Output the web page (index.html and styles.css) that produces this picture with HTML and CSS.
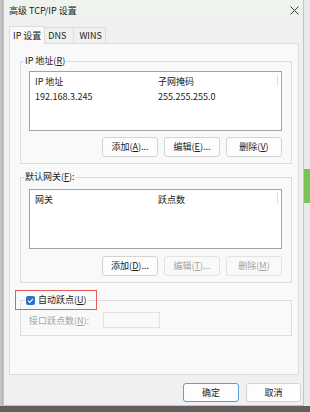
FILE: index.html
```html
<!DOCTYPE html>
<html lang="zh-CN">
<head>
<meta charset="utf-8">
<title>高级 TCP/IP 设置</title>
<link rel="stylesheet" href="styles.css">
</head>
<body>
<div class="screen">
  <div class="desk">
    <div class="side-left"></div>
    <div class="dialog">
      <div class="titlebar">
        <span class="title">高级 TCP/IP 设置</span>
        <svg class="close" width="9" height="9" viewBox="0 0 9 9"><path d="M0.5 0.5L8.5 8.5M8.5 0.5L0.5 8.5" stroke="#3a3a3a" stroke-width="1"/></svg>
      </div>
      <div class="content">
        <div class="tabs">
          <div class="tab active">IP 设置</div>
          <div class="tab">DNS</div>
          <div class="tab">WINS</div>
        </div>
        <div class="panel">
          <fieldset class="group g-ip">
            <legend>IP 地址(<u>R</u>)</legend>
            <div class="gbody">
              <div class="list">
                <div class="row head"><span class="c1">IP 地址</span><span class="c2">子网掩码</span><i class="divider"></i></div>
                <div class="row"><span class="c1">192.168.3.245</span><span class="c2">255.255.255.0</span></div>
              </div>
              <div class="btns">
                <button class="btn">添加(<u>A</u>)...</button>
                <button class="btn">编辑(<u>E</u>)...</button>
                <button class="btn">删除(<u>V</u>)</button>
              </div>
            </div>
          </fieldset>
          <fieldset class="group g-gw">
            <legend>默认网关(<u>F</u>):</legend>
            <div class="gbody">
              <div class="list">
                <div class="row head"><span class="c1">网关</span><span class="c2">跃点数</span><i class="divider"></i></div>
              </div>
              <div class="btns">
                <button class="btn">添加(<u>D</u>)...</button>
                <button class="btn disabled">编辑(<u>T</u>)...</button>
                <button class="btn disabled">删除(<u>M</u>)</button>
              </div>
            </div>
          </fieldset>
          <fieldset class="group g-metric">
            <legend class="check-legend">
              <span class="checkbox"><svg width="9" height="9" viewBox="0 0 9 9"><path d="M2 4.7L3.8 6.4L7 2.8" fill="none" stroke="#fff" stroke-width="1.1"/></svg></span>
              <span>自动跃点(<u>U</u>)</span>
            </legend>
            <div class="gbody metric-row">
              <span class="muted">接口跃点数(<u>N</u>):</span>
              <span class="input"></span>
            </div>
          </fieldset>
        </div>
        <div class="footer">
          <button class="btn primary">确定</button>
          <button class="btn cancel">取消</button>
        </div>
      </div>
    </div>
    <div class="side-right"><div class="green"></div></div>
  </div>
  <div class="taskbar"></div>
</div>
</body>
</html>
```

FILE: styles.css
```css
* { box-sizing: border-box; }
html, body { margin: 0; padding: 0; }
body {
  width: 310px;
  height: 412px;
  overflow: hidden;
  background: #e6e6e6;
  font-family: "Noto Sans CJK SC", "Noto Sans", sans-serif;
  font-size: 9px;
  color: #1b1b1b;
}
.screen { width: 310px; height: 412px; display: flex; flex-direction: column; }
.desk { display: flex; height: 406px; }
.side-left { width: 3px; background: #c8c8c8; }
.side-right { flex: 1; background: #e9e9e9; overflow: hidden; padding-top: 169px; }
.green { height: 34px; background: #7cc25a; }
.taskbar { flex: 1; background: #5f5f5f; }

.dialog {
  width: 301px;
  background: #f0f0f0;
  border: 1px solid #c4c4c4;
  border-top: 0;
  box-shadow: 0 0 3px rgba(0,0,0,0.25);
  display: flex;
  flex-direction: column;
}
.titlebar {
  height: 20px;
  background: #eef4ed;
  display: flex;
  align-items: center;
  justify-content: space-between;
  padding: 1px 4px 0 5px;
}
.title { line-height: 12px; }
.close { display: block; }

.content { padding: 6px 2px 0 5px; }
.tabs { display: flex; align-items: flex-end; height: 17px; position: relative; z-index: 1; }
.tab {
  height: 16px;
  line-height: 15px;
  padding: 0 4px;
  border: 1px solid #dcdcdc;
  border-bottom: 0;
  background: #f0f0f0;
  margin-left: -1px;
  white-space: nowrap;
}
.tab:first-child { margin-left: 0; }
.tab.active {
  height: 18px;
  line-height: 17px;
  background: #f9f9f9;
  margin-bottom: -1px;
  padding: 0 3px 0 3px;
}
.tab:nth-child(2) { padding: 0 7px 0 3px; }
.tab:nth-child(3) { padding: 0 3px 0 5px; }

.panel {
  width: 290px;
  height: 332px;
  background: #f9f9f9;
  border: 1px solid #dcdcdc;
  padding: 11px 6px 0 10px;
}
.group {
  margin: 0;
  padding: 0;
  border: 1px solid #dcdcdc;
  min-width: 0;
}
.group legend {
  margin-left: 3px;
  padding: 0 1px;
  line-height: 12px;
}
.gbody { padding: 4px 9px 6px 8px; }
.g-gw { margin-top: 7px; }
.g-gw .gbody { padding-top: 6px; }
.g-gw .btns { margin-top: 7px; }

.list {
  height: 60px;
  background: #ffffff;
  border: 1px solid #a3a3a3;
  position: relative;
}
.row { display: flex; height: 15px; line-height: 15px; padding-left: 5px; }
.row.head { margin-top: 2px; }
.c1 { width: 123px; }
.c2 { flex: 1; }
.divider { position: absolute; right: 3px; top: 3px; width: 1px; height: 11px; background: #dedede; }

.btns { display: flex; justify-content: flex-end; gap: 6px; margin-top: 6px; }
.btn {
  font: inherit;
  color: #1b1b1b;
  width: 56px;
  height: 20px;
  padding: 0;
  line-height: 18px;
  background: #fdfdfd;
  border: 1px solid #d3d3d3;
  border-radius: 3px;
  text-align: center;
}
.btn.disabled { color: #a3a3a3; border-color: #e3e3e3; background: #f9f9f9; }

.g-metric { margin-top: 10px; }
.check-legend {
  position: relative;
  display: flex;
  align-items: center;
  gap: 3px;
  margin-left: 4px !important;
  padding: 0 1px !important;
  line-height: 14px !important;
}
.check-legend::before {
  content: "";
  position: absolute;
  left: -10px;
  right: -9px;
  top: -3px;
  bottom: -3px;
  border: 1px solid #e35b5b;
}
.checkbox {
  width: 9px;
  height: 9px;
  border-radius: 2px;
  background: #2f6fc4;
  display: flex;
}
.metric-row {
  display: flex;
  align-items: center;
  padding: 5px 9px 7px 8px;
}
.muted { color: #a4a4a4; width: 74px; }
.input {
  width: 57px;
  height: 16px;
  border: 1px solid #e2e2e2;
  background: #f9f9f9;
}

.footer { display: flex; justify-content: flex-end; gap: 7px; margin-top: 8px; }
.footer .btn { height: 19px; line-height: 17px; }
.btn.primary { border-color: #5b9be0; }
.btn.cancel { width: 55px; }
```
